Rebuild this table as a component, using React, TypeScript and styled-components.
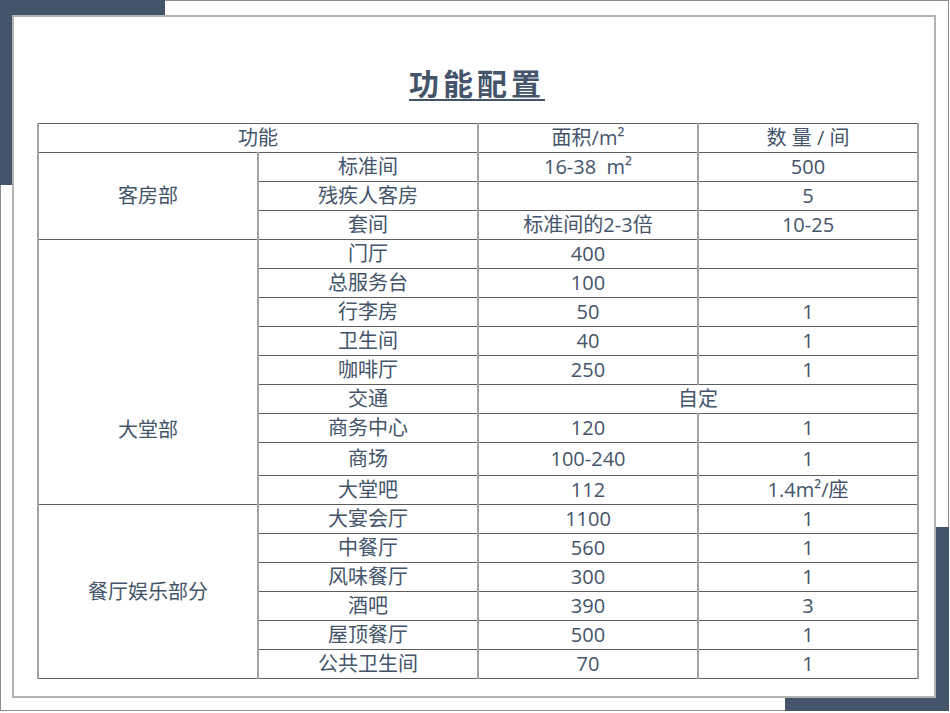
import React from "react";
import styled, { createGlobalStyle } from "styled-components";

const Global = createGlobalStyle`
  html, body { margin: 0; padding: 0; background: #ffffff; }
  body { font-family: "Open Sans", "Noto Sans CJK SC", sans-serif; }
`;

const ACCENT = "#44546a";
const TEXT = "#44546a";

const Page = styled.div`
  position: relative;
  box-sizing: border-box;
  width: 949px;
  height: 711px;
  border: 1px solid #8c8c8c;
  padding: 14px 12px 12px 11px;
  &::before,
  &::after {
    content: "";
    position: absolute;
    background: ${ACCENT};
    z-index: 0;
  }
  &::before {
    left: -1px;
    top: -1px;
    width: 165px;
    height: 185px;
  }
  &::after {
    right: -1px;
    bottom: -2px;
    width: 164px;
    height: 185px;
  }
`;

const Panel = styled.div`
  position: relative;
  z-index: 1;
  box-sizing: border-box;
  width: 924px;
  height: 683px;
  background: #ffffff;
  border: 2px solid #b3b3b3;
  padding: 45px 17px 0 23px;
  display: flex;
  flex-direction: column;
  align-items: flex-start;
`;

const TitleRow = styled.div`
  width: 880px;
  display: flex;
  justify-content: center;
  margin-bottom: 21px;
`;

const Title = styled.h1`
  margin: 0;
  font-family: "Noto Sans CJK SC", sans-serif;
  font-size: 30px;
  line-height: 40px;
  font-weight: 700;
  letter-spacing: 4px;
  color: ${ACCENT};
  text-decoration: underline;
  text-decoration-thickness: 2px;
  text-underline-offset: 4px;
`;

const Table = styled.table`
  width: 880px;
  border-collapse: collapse;
  table-layout: fixed;
  color: ${TEXT};
  font-family: "Open Sans", "Noto Sans CJK SC", sans-serif;
  font-size: 20px;
`;

const Col = styled.col`
  width: 220px;
`;

const Row = styled.tr<{ $h: number }>`
  height: ${(p) => p.$h}px;
`;

const Cell = styled.td<{ $bottomPad?: number }>`
  padding: 0 0 ${(p) => p.$bottomPad ?? 0}px 0;
  text-align: center;
  vertical-align: ${(p) => (p.$bottomPad ? "bottom" : "middle")};
  line-height: 28px;
  white-space: nowrap;
  border-top: 1px solid #5e5e5e;
  border-bottom: 1px solid #5e5e5e;
  border-left: 2px solid #a3a3a3;
  border-right: 2px solid #a3a3a3;
`;

const HeadCell = styled.th`
  padding: 0;
  font-weight: 400;
  text-align: center;
  vertical-align: middle;
  line-height: 28px;
  white-space: nowrap;
  border-top: 1px solid #5e5e5e;
  border-bottom: 1px solid #5e5e5e;
  border-left: 2px solid #a3a3a3;
  border-right: 2px solid #a3a3a3;
`;

type Item = { name: string; area?: string; qty?: string; merged?: string; h: number };
type Group = { label: string; bottomPad?: number; items: Item[] };

const groups: Group[] = [
  {
    label: "客房部",
    items: [
      { name: "标准间", area: "16-38\u00a0\u00a0m²", qty: "500", h: 29 },
      { name: "残疾人客房", area: "", qty: "5", h: 29 },
      { name: "套间", area: "标准间的2-3倍", qty: "10-25", h: 29 },
    ],
  },
  {
    label: "大堂部",
    bottomPad: 60,
    items: [
      { name: "门厅", area: "400", qty: "", h: 29 },
      { name: "总服务台", area: "100", qty: "", h: 29 },
      { name: "行李房", area: "50", qty: "1", h: 29 },
      { name: "卫生间", area: "40", qty: "1", h: 29 },
      { name: "咖啡厅", area: "250", qty: "1", h: 29 },
      { name: "交通", merged: "自定", h: 29 },
      { name: "商务中心", area: "120", qty: "1", h: 29 },
      { name: "商场", area: "100-240", qty: "1", h: 33 },
      { name: "大堂吧", area: "112", qty: "1.4m²/座", h: 28 },
    ],
  },
  {
    label: "餐厅娱乐部分",
    items: [
      { name: "大宴会厅", area: "1100", qty: "1", h: 29 },
      { name: "中餐厅", area: "560", qty: "1", h: 29 },
      { name: "风味餐厅", area: "300", qty: "1", h: 29 },
      { name: "酒吧", area: "390", qty: "3", h: 29 },
      { name: "屋顶餐厅", area: "500", qty: "1", h: 29 },
      { name: "公共卫生间", area: "70", qty: "1", h: 29 },
    ],
  },
];

export default function App() {
  return (
    <>
      <Global />
      <Page>
        <Panel>
          <TitleRow>
            <Title>功能配置</Title>
          </TitleRow>
          <Table>
            <colgroup>
              <Col />
              <Col />
              <Col />
              <Col />
            </colgroup>
            <thead>
              <Row $h={29}>
                <HeadCell colSpan={2}>功能</HeadCell>
                <HeadCell>面积/m²</HeadCell>
                <HeadCell>数 量 / 间</HeadCell>
              </Row>
            </thead>
            <tbody>
              {groups.map((g) =>
                g.items.map((it, i) => (
                  <Row key={g.label + it.name} $h={it.h}>
                    {i === 0 && (
                      <Cell rowSpan={g.items.length} $bottomPad={g.bottomPad}>
                        {g.label}
                      </Cell>
                    )}
                    <Cell>{it.name}</Cell>
                    {it.merged !== undefined ? (
                      <Cell colSpan={2}>{it.merged}</Cell>
                    ) : (
                      <>
                        <Cell>{it.area}</Cell>
                        <Cell>{it.qty}</Cell>
                      </>
                    )}
                  </Row>
                ))
              )}
            </tbody>
          </Table>
        </Panel>
      </Page>
    </>
  );
}
